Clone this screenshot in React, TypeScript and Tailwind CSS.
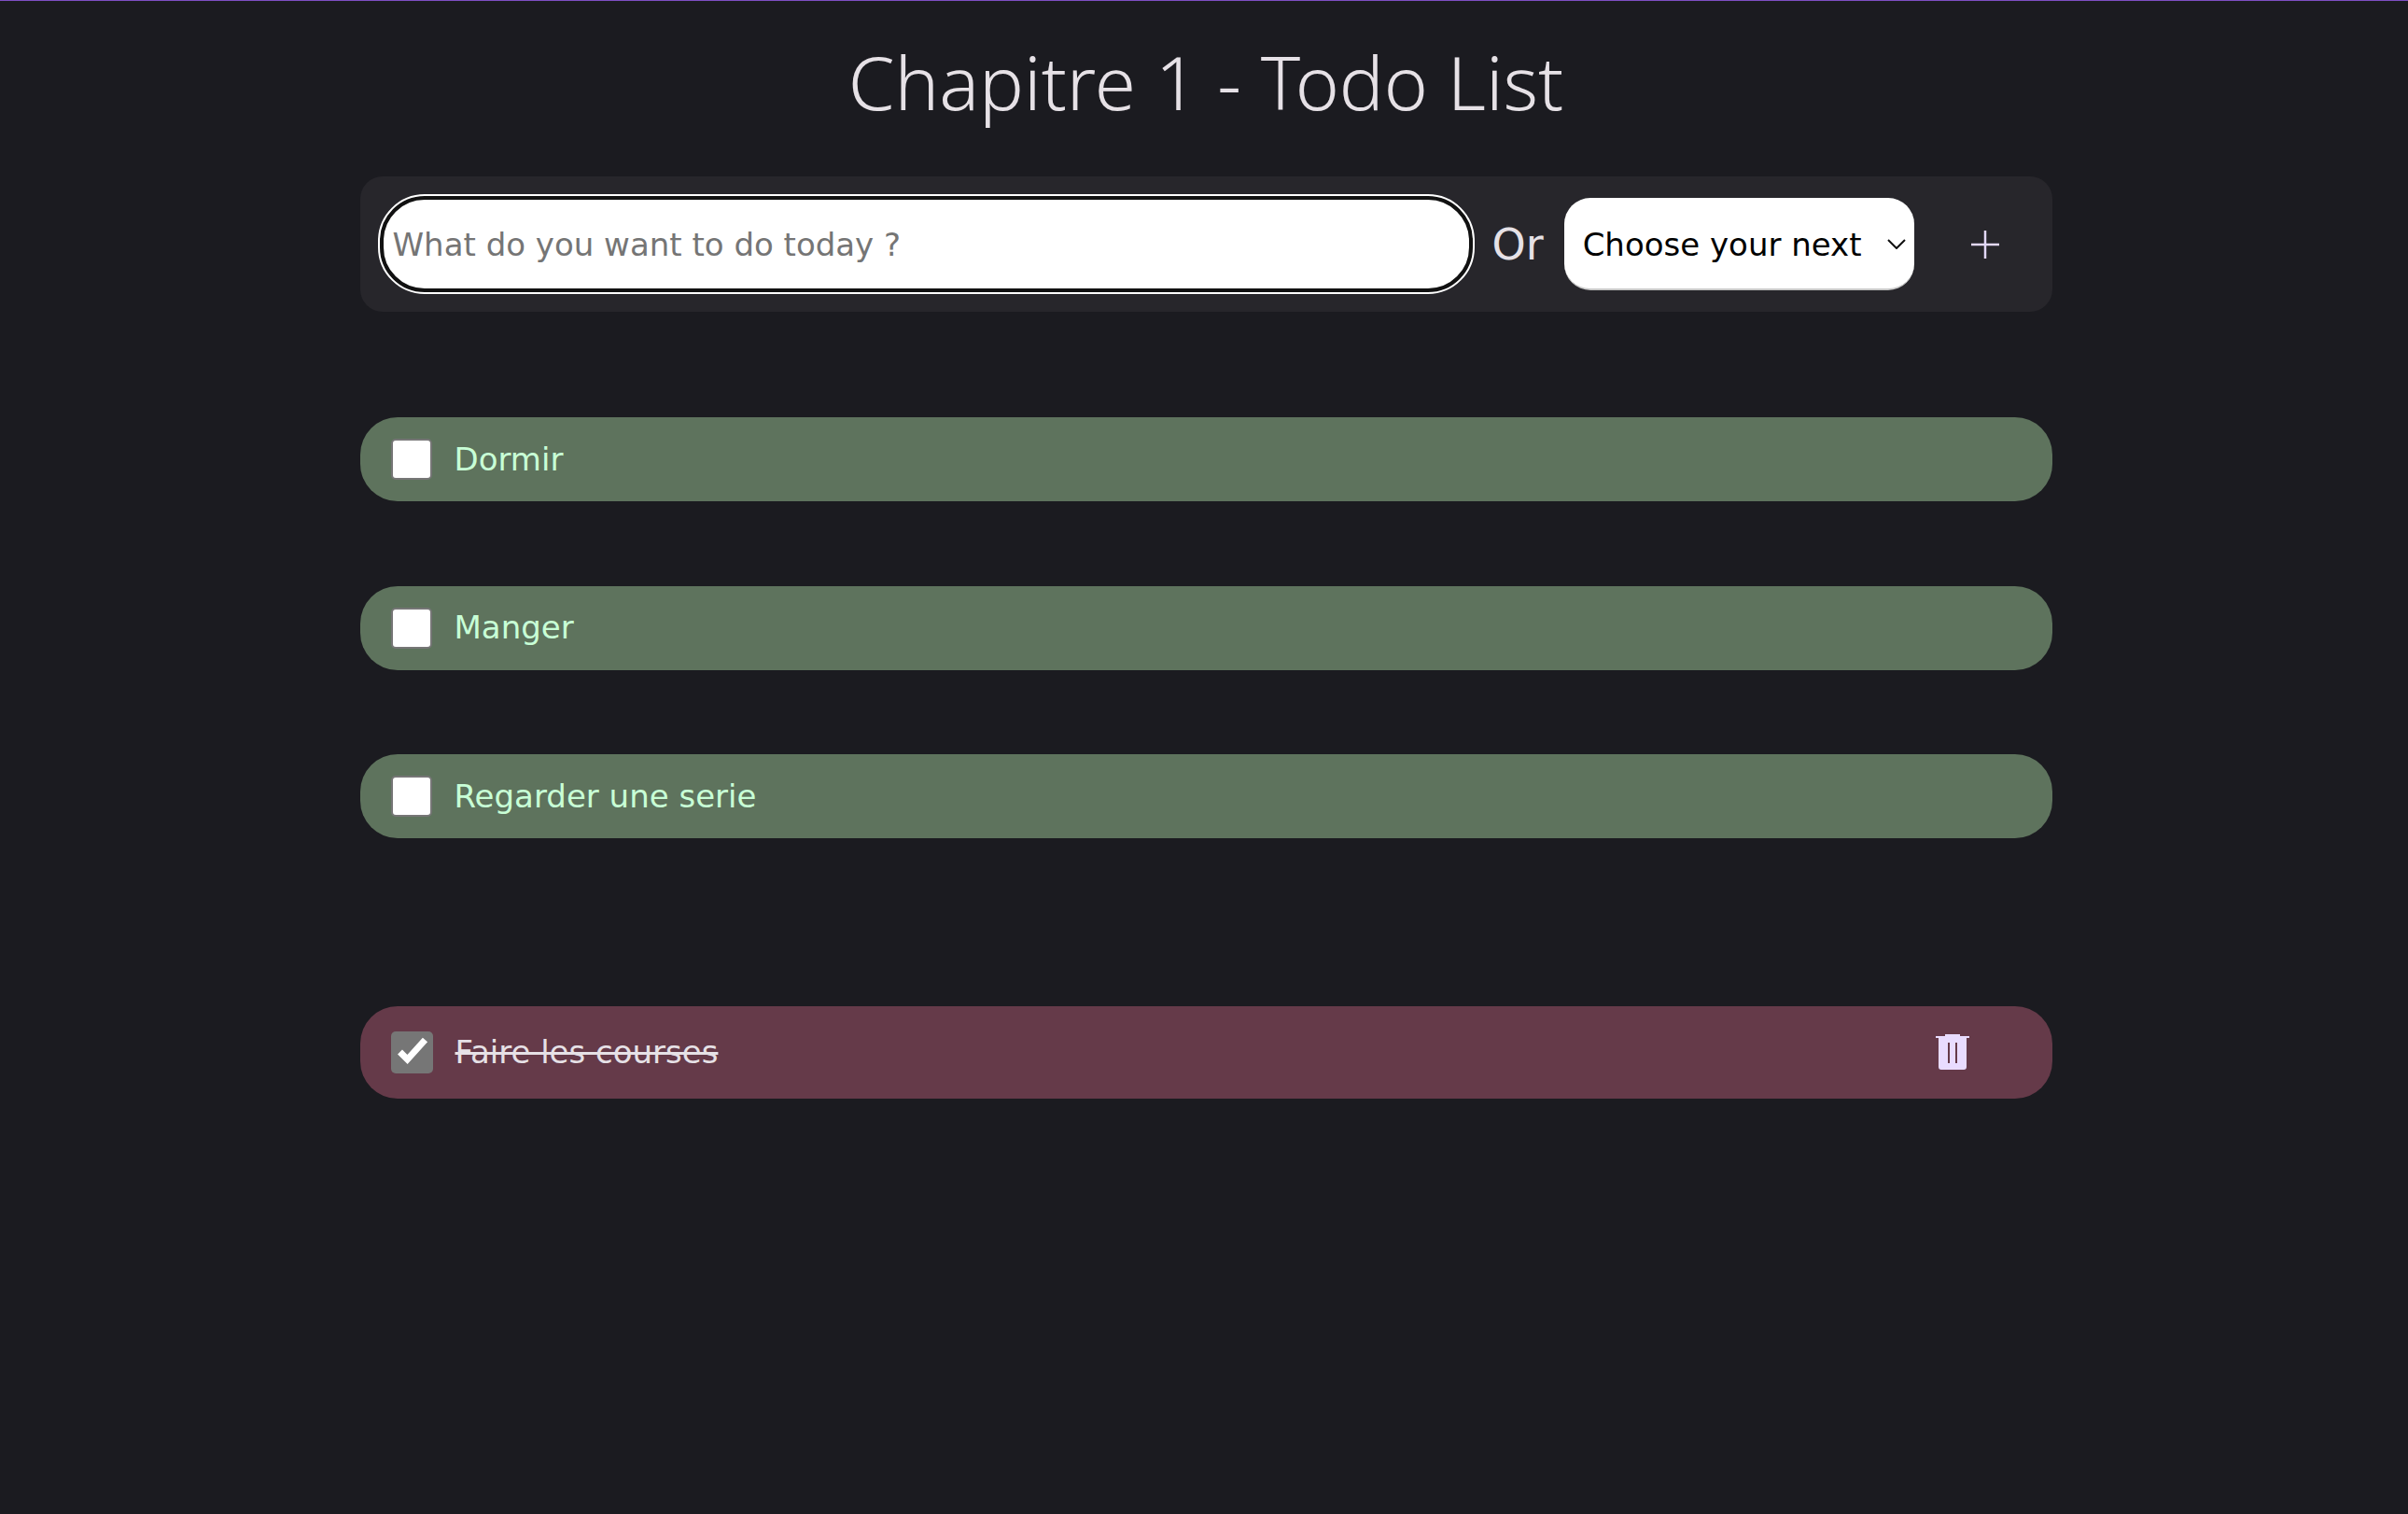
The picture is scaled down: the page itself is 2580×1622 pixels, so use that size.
import { useState } from "react";

const bodyFont = { fontFamily: '"DejaVu Sans", Verdana, sans-serif' };

function TrashIcon() {
  return (
    <svg width="36" height="40" viewBox="0 0 36 40" fill="#e9dcff" className="mb-[2px]" aria-hidden="true">
      <path d="M10 1h16v2h10v2H33v31a3 3 0 0 1-3 3H6a3 3 0 0 1-3-3V5H0V3h10z" />
      <rect x="13" y="10" width="2" height="22" fill="#653a49" />
      <rect x="21" y="10" width="2" height="22" fill="#653a49" />
    </svg>
  );
}

function PlusIcon() {
  return (
    <svg width="32" height="32" viewBox="0 0 32 32" stroke="#e3d8f8" strokeWidth="2.5" aria-hidden="true">
      <path d="M16 1v30M1 16h30" />
    </svg>
  );
}

export default function App() {
  const [todos] = useState(["Dormir", "Manger", "Regarder une serie"]);

  return (
    <div className="min-h-[1622px] border-t border-[#7e4fc4] bg-[#1b1b20]" style={bodyFont}>
      <div className="mx-auto w-[1813px] translate-x-[2px]">
        <h1 className="pt-[42px] text-center text-[80px] leading-[88px] font-light text-[#e6e1e6] font-['Noto_Sans',sans-serif]">
          Chapitre 1 - Todo List
        </h1>

        <form className="mt-[58px] flex h-[145px] items-center rounded-[24px] bg-[#27262b] pl-[21px]">
          <input
            className="h-[103px] w-[1171px] rounded-[48px] border-4 border-[#111] bg-white px-[10px] pt-[1px] text-[34px] outline-2 outline-white placeholder:text-[#757575]"
            placeholder="What do you want to do today ?"
          />
          <span className="ml-[21px] pt-[2px] text-[46px] text-[#e6e1e6]">Or</span>
          <div className="relative ml-[22px]">
            <select className="h-[99px] w-[375px] appearance-none rounded-[28px] border-b-2 border-[#c8c8c8] bg-white pt-[4px] pl-[20px] text-[34px] text-black">
              <option>Choose your next</option>
            </select>
            <svg
              width="20"
              height="11"
              viewBox="0 0 20 11"
              fill="none"
              stroke="#111"
              strokeWidth="2"
              className="absolute top-[44px] right-[9px]"
              aria-hidden="true"
            >
              <path d="M1 1l9 9 9-9" />
            </svg>
          </div>
          <button type="button" className="ml-[60px] flex items-center justify-center">
            <PlusIcon />
          </button>
        </form>

        <ul className="mt-[113px] flex flex-col gap-[90.5px]">
          {todos.map((todo) => (
            <li key={todo} className="flex h-[90px] items-center rounded-[40px] bg-[#5e735d] pl-[33px]">
              <input
                type="checkbox"
                className="h-[44px] w-[44px] appearance-none rounded-[5px] border-2 border-[#767676] bg-white"
              />
              <span className="ml-[24px] text-[34px] text-[#c8ffd6]">{todo}</span>
            </li>
          ))}
        </ul>

        <div className="mt-[180px] flex h-[99px] items-center justify-between rounded-[40px] bg-[#653a49] pr-[89px] pl-[33px]">
          <div className="flex items-center">
            <div className="relative h-[45px] w-[45px]">
              <input
                type="checkbox"
                checked
                readOnly
                className="block h-[45px] w-[45px] appearance-none rounded-[5px] bg-[#767676]"
              />
              <svg
                width="45"
                height="45"
                viewBox="0 0 45 45"
                fill="none"
                stroke="#fff"
                strokeWidth="7"
                className="pointer-events-none absolute top-0 left-0"
                aria-hidden="true"
              >
                <path d="M9.5 22l8 8 19-21" />
              </svg>
            </div>
            <span className="ml-[24px] text-[34px] text-[#e6e1e6] line-through">Faire les courses</span>
          </div>
          <TrashIcon />
        </div>
      </div>
    </div>
  );
}
